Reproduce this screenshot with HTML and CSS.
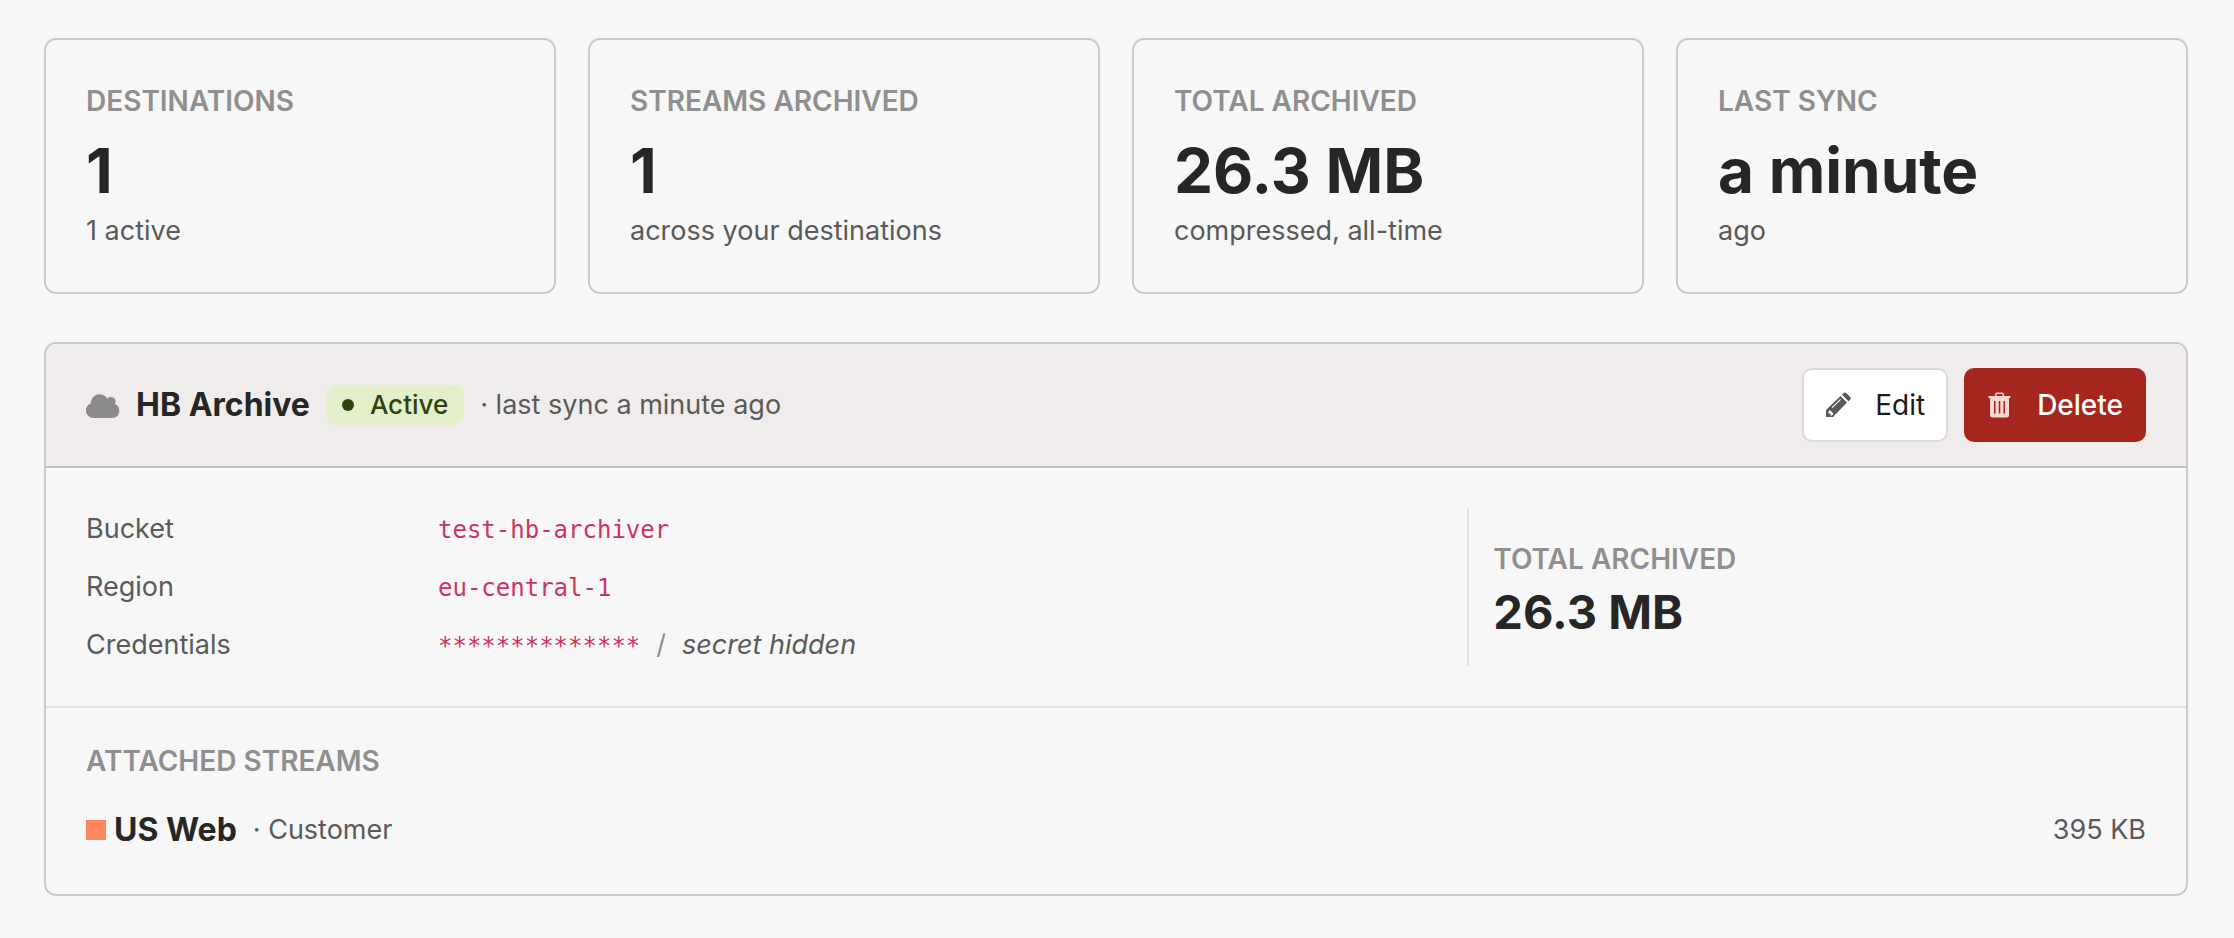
FILE: index.html
```html
<!DOCTYPE html>
<html lang="en">
<head>
    <meta charset="UTF-8">
    <meta name="viewport" content="width=device-width, initial-scale=1.0">
    <title>Archive destinations</title>
    <link rel="stylesheet" href="styles.css">
</head>
<body>
    <section class="stats">
        <div class="stat">
            <div class="label">Destinations</div>
            <div class="stat-value">1</div>
            <div class="stat-note">1 active</div>
        </div>
        <div class="stat">
            <div class="label">Streams archived</div>
            <div class="stat-value">1</div>
            <div class="stat-note">across your destinations</div>
        </div>
        <div class="stat">
            <div class="label">Total archived</div>
            <div class="stat-value">26.3 MB</div>
            <div class="stat-note">compressed, all-time</div>
        </div>
        <div class="stat">
            <div class="label">Last sync</div>
            <div class="stat-value">a minute</div>
            <div class="stat-note">ago</div>
        </div>
    </section>

    <section class="destination">
        <header class="destination-header">
            <svg class="cloud-icon" viewBox="0 0 34 25" aria-hidden="true">
                <path d="M7.500 25a7.500 7.500 0 0 1-2.800-14.500A9 9 0 0 1 21.500 5.800a4.300 4.300 0 0 1 7.300 5.200A7.300 7.300 0 0 1 26.500 25z"/>
            </svg>
            <h2>HB Archive</h2>
            <span class="badge"><span class="badge-dot"></span>Active</span>
            <span class="last-sync">· last sync a minute ago</span>
            <div class="actions">
                <button type="button" class="btn">
                    <svg class="btn-icon" viewBox="0 0 26 26" aria-hidden="true">
                        <path fill-rule="evenodd" d="M1 18 15.500 4l6.500 6.500L8 25H1zM3.500 19.500v2h2v2h1.500l1.500-1.500-3.500-4zM7.500 16l8.500-8.300-.8-.8-8.500 8.300z"/>
                        <path d="m17 2.800 1.500-1.500a2 2 0 0 1 3 0l3.500 3.500a2 2 0 0 1 0 3L23.500 9.300z"/>
                    </svg>
                    Edit
                </button>
                <button type="button" class="btn btn-danger">
                    <svg class="btn-icon" viewBox="0 0 26 26" aria-hidden="true">
                        <path fill-rule="evenodd" d="M8 4V2.500Q8 .5 10 .5h5q2 0 2 2V4h6.500v2H22v17q0 2.500-2.500 2.500h-14Q3 25.500 3 23V6H1.500V4zM9.500 4h6V2h-6zM7 9v12.500h1.500V9zM11.800 9v12.500h1.500V9zM16.500 9v12.500h1.500V9z"/>
                    </svg>
                    Delete
                </button>
            </div>
        </header>

        <div class="destination-body">
            <dl class="details">
                <dt>Bucket</dt>
                <dd><code>test-hb-archiver</code></dd>
                <dt>Region</dt>
                <dd><code>eu-central-1</code></dd>
                <dt>Credentials</dt>
                <dd><code>**************</code><span class="slash">/</span><em>secret hidden</em></dd>
            </dl>
            <div class="total">
                <div class="label">Total archived</div>
                <div class="total-value">26.3 MB</div>
            </div>
        </div>

        <div class="streams">
            <div class="label">Attached streams</div>
            <div class="stream">
                <span class="stream-color"></span>
                <strong class="stream-name">US Web</strong>
                <span class="stream-type">· Customer</span>
                <span class="stream-size">395 KB</span>
            </div>
        </div>
    </section>
</body>
</html>
```
FILE: styles.css
```css
* {
    box-sizing: border-box;
}
body {
    margin: 0;
    padding: 38px 46px 40px 44px;
    background-color: #f7f7f7;
    color: #5a5a5a;
    font-family: Inter, "Liberation Sans", sans-serif;
    font-size: 27px;
    line-height: 42px;
}
.label {
    color: #8f8f8f;
    font-size: 28px;
    font-weight: 600;
    text-transform: uppercase;
}

/* Stat cards */
.stats {
    display: grid;
    grid-template-columns: repeat(4, 1fr);
    gap: 32px;
    margin-bottom: 48px;
}
.stat {
    padding: 40px;
    border: 2px solid #cacaca;
    border-radius: 12px;
}
.stat-value {
    margin-top: 10px;
    color: #262626;
    font-size: 62px;
    font-weight: 700;
    line-height: 78px;
}

/* Destination card */
.destination {
    border: 2px solid #cacaca;
    border-radius: 12px;
    overflow: hidden;
}
.destination-header {
    display: flex;
    align-items: center;
    gap: 16px;
    padding: 24px 40px;
    border-bottom: 2px solid #c4c2c1;
    background-color: #f0eceb;
}
.destination-header h2 {
    margin: 0;
    color: #262626;
    font-size: 32px;
    font-weight: 700;
}
.cloud-icon {
    width: 34px;
    height: 25px;
    fill: #8c8b8a;
}
.badge {
    display: flex;
    align-items: center;
    gap: 16px;
    padding: 0 16px;
    border-radius: 10px;
    background-color: #e3efca;
    color: #30430d;
    font-size: 26px;
    font-weight: 500;
    line-height: 40px;
}
.badge-dot {
    width: 12px;
    height: 12px;
    border-radius: 50%;
    background-color: #30430d;
}
.actions {
    display: flex;
    gap: 16px;
    margin-left: auto;
}
.btn {
    display: flex;
    align-items: center;
    gap: 24px;
    height: 74px;
    padding: 0 21px;
    border: 2px solid #dcdad9;
    border-radius: 10px;
    background-color: #fff;
    color: #1a1a1a;
    font: inherit;
    font-size: 28px;
    cursor: pointer;
}
.btn-icon {
    width: 26px;
    height: 26px;
    fill: #5a5a5a;
}
.btn-danger {
    border-color: #a4261e;
    background-color: #a4261e;
    color: #fff;
    font-weight: 500;
}
.btn-danger .btn-icon {
    fill: #fbd5d2;
}

.destination-body {
    display: grid;
    grid-template-columns: 2fr 1fr;
    gap: 24px;
    padding: 40px;
    border-bottom: 2px solid #e2e2e2;
}
.details {
    display: grid;
    grid-template-columns: 320px 1fr;
    gap: 16px 32px;
    margin: 0;
}
.details dd {
    margin: 0;
}
.details code {
    color: #cb3563;
    font-family: "DejaVu Sans Mono", monospace;
    font-size: 24px;
    line-height: 24px;
}
.slash {
    margin: 0 16px;
    color: #8f8f8f;
}
.total {
    display: flex;
    flex-direction: column;
    justify-content: center;
    padding-left: 24px;
    border-left: 2px solid #e2e2e2;
}
.total-value {
    margin-top: 8px;
    color: #262626;
    font-size: 47px;
    font-weight: 700;
    line-height: 48px;
}

/* Attached streams */
.streams {
    padding: 32px 40px 40px;
}
.stream {
    display: flex;
    align-items: center;
    margin-top: 24px;
    line-height: 48px;
}
.stream-color {
    width: 20px;
    height: 20px;
    margin-right: 8px;
    background-color: #ff865e;
}
.stream-name {
    margin-right: 16px;
    color: #262626;
    font-size: 32px;
    font-weight: 700;
}
.stream-size {
    margin-left: auto;
}
```
